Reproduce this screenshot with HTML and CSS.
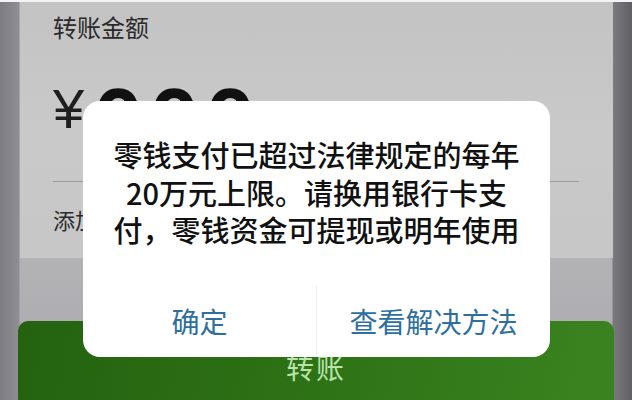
FILE: index.html
```html
<!DOCTYPE html>
<html lang="zh-CN">
<head>
<meta charset="utf-8">
<title>转账</title>
<link rel="stylesheet" href="styles.css">
</head>
<body>
<div class="topline"></div>
<main class="screen">
  <section class="card">
    <div class="label">转账金额</div>
    <div class="amount">
      <span class="currency">¥</span>
      <span class="digits">000</span>
    </div>
    <div class="note">添加转账说明</div>
  </section>
  <div class="pay-btn">转账</div>
</main>

<div class="alert" role="alertdialog">
  <p class="alert-msg">零钱支付已超过法律规定的每年<br>20万元上限。请换用银行卡支<br>付，零钱资金可提现或明年使用</p>
  <div class="alert-actions">
    <button class="alert-btn">确定</button>
    <button class="alert-btn">查看解决方法</button>
  </div>
</div>
</body>
</html>
```

FILE: styles.css
```css
* { box-sizing: border-box; }

html, body {
  margin: 0;
  width: 632px;
  height: 400px;
  overflow: hidden;
}

body {
  position: relative;
  font-family: "Noto Sans CJK SC", "Noto Sans", sans-serif;
  background: #ffffff;
}

.topline {
  height: 2px;
  background: #f4f4f4;
}

/* dimmed page behind the alert */
.screen {
  height: 398px;
  display: flex;
  flex-direction: column;
  padding: 0 19px 0 20px;
  background:
    linear-gradient(90deg,
      #7c7c82 0,
      #8e8e94 19px,
      rgba(0,0,0,0) 20px,
      rgba(0,0,0,0) 612px,
      #7a7a7f 613px,
      #5f5f64 632px),
    linear-gradient(180deg, #bfbfc1 0, #b4b4b7 60%, #a9a9ad 100%);
}

.card {
  flex: 0 0 256px;
  padding: 8px 34px 0 33px;
  background: linear-gradient(180deg, #c3c3c4 0, #c9c9ca 50%, #c7c7c8 100%);
  color: #2a2a2a;
}

.label {
  font-size: 24px;
  line-height: 34px;
}

.amount {
  display: flex;
  align-items: flex-start;
  gap: 9px;
  height: 138px;
  padding-top: 37px;
  border-bottom: 1px solid #9a9a9c;
  overflow: hidden;
}

.currency {
  font-family: "Liberation Sans", sans-serif;
  font-size: 56px;
  line-height: 56px;
  color: #1e1e1e;
}

.digits {
  margin-top: -5px;
  font-family: "Liberation Sans", sans-serif;
  font-weight: bold;
  font-size: 90px;
  line-height: 90px;
  letter-spacing: 6px;
  color: #111;
}

.note {
  margin-top: 22px;
  font-size: 22px;
  line-height: 30px;
  color: #2a2a2a;
}

.pay-btn {
  flex: 0 0 90px;
  margin: 63px -1px 0 -2px;
  border-radius: 10px;
  background: linear-gradient(100deg, #24620f 0, #2d7015 45%, #3a8420 100%);
  color: #b9e3a9;
  font-size: 28px;
  line-height: 30px;
  padding-top: 31px;
  text-align: center;
  letter-spacing: 2px;
}

/* alert dialog floating over the page */
.alert {
  position: absolute;
  left: 83px;
  top: 101px;
  width: 467px;
  height: 256px;
  border-radius: 17px;
  background: #ffffff;
  display: flex;
  flex-direction: column;
}

.alert-msg {
  margin: 0;
  padding: 35px 20px 0;
  font-size: 29px;
  font-weight: 500;
  line-height: 37.5px;
  text-align: center;
  color: #111111;
  white-space: nowrap;
}

.alert-actions {
  margin-top: auto;
  display: flex;
  height: 72px;
}

.alert-btn {
  flex: 1;
  border: 0;
  padding: 0;
  background: transparent;
  font-family: inherit;
  font-size: 28px;
  color: #2f6f9d;
}

.alert-btn + .alert-btn {
  border-left: 1px solid #f0f0f0;
}
```
